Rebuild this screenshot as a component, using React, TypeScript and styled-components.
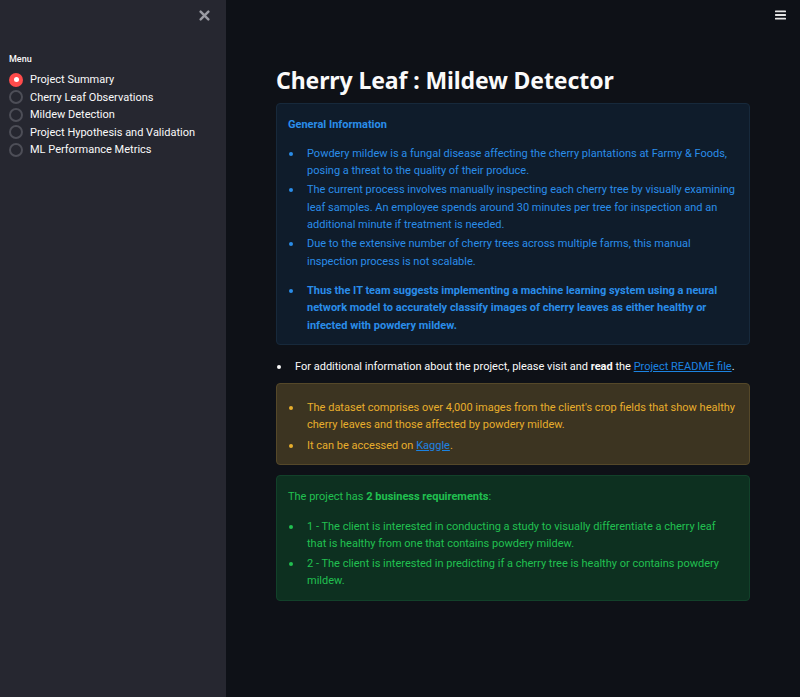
import React from "react";
import styled, { createGlobalStyle, css } from "styled-components";

const GlobalStyle = createGlobalStyle`
  html, body { margin: 0; padding: 0; background: #0e1117; }
  body { font-family: Roboto, "Liberation Sans", sans-serif; color: #fafafa; }
  * { box-sizing: border-box; }
`;

const Shell = styled.div`
  display: flex;
  width: 800px;
  height: 697px;
  overflow: hidden;
`;

const Sidebar = styled.aside`
  width: 226px;
  flex: 0 0 226px;
  background: #262730;
  display: flex;
  flex-direction: column;
  padding: 9px 9px 0 9px;
`;

const SidebarTop = styled.div`
  display: flex;
  justify-content: flex-end;
  padding-right: 7px;
  height: 12px;
  color: #9a9ba3;
`;

const MenuLabel = styled.div`
  margin-top: 32px;
  font-size: 9px;
  font-weight: 500;
  color: #fafafa;
  line-height: 12px;
`;

const RadioList = styled.div`
  margin-top: 6px;
  display: flex;
  flex-direction: column;
`;

const RadioRow = styled.div`
  display: flex;
  align-items: center;
  height: 17.5px;
  gap: 7px;
  font-size: 11px;
  color: #fafafa;
`;

const RadioCircle = styled.span<{ $checked?: boolean }>`
  width: 14px;
  height: 14px;
  border-radius: 50%;
  flex: 0 0 14px;
  display: flex;
  align-items: center;
  justify-content: center;
  ${(p) =>
    p.$checked
      ? css`
          background: #ff4b4b;
          &::after {
            content: "";
            width: 5px;
            height: 5px;
            border-radius: 50%;
            background: #ffffff;
          }
        `
      : css`
          border: 2px solid #4d4e57;
        `}
`;

const Main = styled.main`
  flex: 1;
  display: flex;
  flex-direction: column;
`;

const Header = styled.header`
  height: 40px;
  display: flex;
  justify-content: flex-end;
  padding: 10px 14px 0 0;
`;

const Content = styled.div`
  width: 474px;
  margin: 0 auto;
  padding-top: 27px;
  display: flex;
  flex-direction: column;
`;

const Title = styled.h1`
  margin: 0 0 10px 0;
  font-family: "Noto Sans", Roboto, sans-serif;
  font-size: 23px;
  line-height: 26px;
  font-weight: 700;
  color: #fafafa;
  letter-spacing: -0.1px;
`;

const tones = {
  info: { bg: "#0f1c2b", border: "#17293b", fg: "#2a8de9" },
  warning: { bg: "#3c3421", border: "#554829", fg: "#e8ae2c" },
  success: { bg: "#0d3020", border: "#12412a", fg: "#21c050" },
};

type Tone = keyof typeof tones;

const Alert = styled.div<{ $tone: Tone; $mt?: number; $pt?: number }>`
  background: ${(p) => tones[p.$tone].bg};
  border: 1px solid ${(p) => tones[p.$tone].border};
  color: ${(p) => tones[p.$tone].fg};
  border-radius: 4px;
  padding: ${(p) => p.$pt ?? 11}px 12px 10px 11px;
  margin-top: ${(p) => p.$mt ?? 0}px;
  font-size: 11px;
  line-height: 17.5px;
`;

const Para = styled.p<{ $mb?: number }>`
  margin: 0 0 ${(p) => p.$mb ?? 0}px 0;
`;

const List = styled.ul<{ $mt?: number; $gap?: number }>`
  list-style: none;
  margin: ${(p) => p.$mt ?? 0}px 0 0 0;
  padding: 0;
  display: flex;
  flex-direction: column;
  gap: ${(p) => p.$gap ?? 1.5}px;
`;

const Item = styled.li`
  display: grid;
  grid-template-columns: 19px 1fr;
`;

const Dot = styled.span`
  display: block;
  width: 4px;
  height: 4px;
  border-radius: 50%;
  background: currentColor;
  margin: 7px 0 0 1px;
`;

const Strong = styled.b`
  font-weight: 700;
`;

const Link = styled.a`
  color: #1c83e1;
  text-decoration: underline;
`;

const PlainList = styled(List)`
  margin: 13px 0 7px 0;
  color: #fafafa;
  font-size: 11px;
  line-height: 17.5px;
`;

const CloseIcon = () => (
  <svg width="11" height="11" viewBox="0 0 10 10" style={{ marginTop: 1 }}>
    <path d="M1.5 1.5 L8.5 8.5 M8.5 1.5 L1.5 8.5" stroke="#9a9ba3" strokeWidth="2.2" strokeLinecap="round" />
  </svg>
);

const Burger = () => (
  <svg width="11" height="10" viewBox="0 0 11 10">
    <rect x="0" y="0.5" width="11" height="1.8" rx="0.6" fill="#e6e6e6" />
    <rect x="0" y="4.1" width="11" height="1.8" rx="0.6" fill="#e6e6e6" />
    <rect x="0" y="7.7" width="11" height="1.8" rx="0.6" fill="#e6e6e6" />
  </svg>
);

const pages = [
  "Project Summary",
  "Cherry Leaf Observations",
  "Mildew Detection",
  "Project Hypothesis and Validation",
  "ML Performance Metrics",
];

export default function App() {
  return (
    <>
      <GlobalStyle />
      <Shell>
        <Sidebar>
          <SidebarTop>
            <CloseIcon />
          </SidebarTop>
          <MenuLabel>Menu</MenuLabel>
          <RadioList>
            {pages.map((p, i) => (
              <RadioRow key={p}>
                <RadioCircle $checked={i === 0} />
                {p}
              </RadioRow>
            ))}
          </RadioList>
        </Sidebar>
        <Main>
          <Header>
            <Burger />
          </Header>
          <Content>
            <Title>Cherry Leaf : Mildew Detector</Title>
            <Alert $tone="info" $pt={12}>
              <Para $mb={11}>
                <Strong>General Information</Strong>
              </Para>
              <List>
                <Item>
                  <Dot />
                  <span>
                    Powdery mildew is a fungal disease affecting the cherry plantations at Farmy &amp; Foods,
                    posing a threat to the quality of their produce.
                  </span>
                </Item>
                <Item>
                  <Dot />
                  <span>
                    The current process involves manually inspecting each cherry tree by visually examining leaf
                    samples. An employee spends around 30 minutes per tree for inspection and an additional
                    minute if treatment is needed.
                  </span>
                </Item>
                <Item>
                  <Dot />
                  <span>
                    Due to the extensive number of cherry trees across multiple farms, this manual inspection
                    process is not scalable.
                  </span>
                </Item>
              </List>
              <List $mt={11.5}>
                <Item>
                  <Dot />
                  <Strong>
                    Thus the IT team suggests implementing a machine learning system using a neural network
                    model to accurately classify images of cherry leaves as either healthy or infected with
                    powdery mildew.
                  </Strong>
                </Item>
              </List>
            </Alert>
            <PlainList>
              <Item>
                <Dot />
                <span>
                  For additional information about the project, please visit and <Strong>read</Strong> the{" "}
                  <Link href="#">Project README file</Link>.
                </span>
              </Item>
            </PlainList>
            <Alert $tone="warning" $pt={15}>
              <List $gap={3}>
                <Item>
                  <Dot />
                  <span>
                    The dataset comprises over 4,000 images from the client's crop fields that show healthy
                    cherry leaves and those affected by powdery mildew.
                  </span>
                </Item>
                <Item>
                  <Dot />
                  <span>
                    It can be accessed on <Link href="#">Kaggle</Link>.
                  </span>
                </Item>
              </List>
            </Alert>
            <Alert $tone="success" $mt={10} $pt={12}>
              <Para $mb={12}>
                The project has <Strong>2 business requirements</Strong>:
              </Para>
              <List $gap={2}>
                <Item>
                  <Dot />
                  <span>
                    1 - The client is interested in conducting a study to visually differentiate a cherry leaf
                    that is healthy from one that contains powdery mildew.
                  </span>
                </Item>
                <Item>
                  <Dot />
                  <span>
                    2 - The client is interested in predicting if a cherry tree is healthy or contains powdery
                    mildew.
                  </span>
                </Item>
              </List>
            </Alert>
          </Content>
        </Main>
      </Shell>
    </>
  );
}
